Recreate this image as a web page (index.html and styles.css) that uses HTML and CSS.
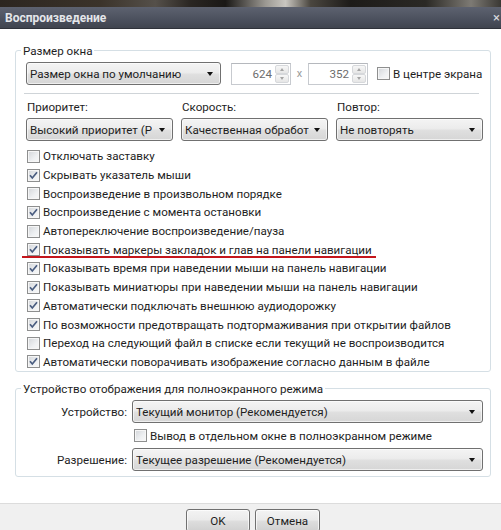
FILE: index.html
```html
<!DOCTYPE html>
<html lang="ru">
<head>
<meta charset="utf-8">
<title>Воспроизведение</title>
<link rel="stylesheet" href="styles.css">
</head>
<body>
<div class="window">
  <div class="photo"></div>
  <div class="titlebar">
    <span class="title">Воспроизведение</span>
    <span class="close">×</span>
  </div>
  <div class="content">
    <div class="group g1">
      <span class="legend">Размер окна</span>
      <div class="size-row">
        <div class="select sel-size"><span class="sel-text">Размер окна по умолчанию</span><span class="arrow"></span></div>
        <div class="spin"><span class="spin-val">624</span><span class="spin-btns"><span class="sb"><span class="up"></span></span><span class="sb"><span class="down"></span></span></span></div>
        <span class="times">x</span>
        <div class="spin"><span class="spin-val">352</span><span class="spin-btns"><span class="sb"><span class="up"></span></span><span class="sb"><span class="down"></span></span></span></div>
        <div class="check center-check"><span class="box"></span><span>В центре экрана</span></div>
      </div>
      <div class="sep"></div>
      <div class="triple">
        <div class="field">
          <div class="flabel">Приоритет:</div>
          <div class="select"><span class="sel-text">Высокий приоритет (Р</span><span class="arrow"></span></div>
        </div>
        <div class="field">
          <div class="flabel">Скорость:</div>
          <div class="select"><span class="sel-text">Качественная обработ</span><span class="arrow"></span></div>
        </div>
        <div class="field">
          <div class="flabel">Повтор:</div>
          <div class="select"><span class="sel-text">Не повторять</span><span class="arrow"></span></div>
        </div>
      </div>
      <div class="checks">
        <div class="check"><span class="box"></span><span>Отключать заставку</span></div>
        <div class="check"><span class="box on"><svg viewBox="0 0 11 11" width="11" height="11"><path d="M2 5.2 L4.3 8 L9 2.2" fill="none" stroke="#4a5d80" stroke-width="1.7"/></svg></span><span>Скрывать указатель мыши</span></div>
        <div class="check"><span class="box"></span><span>Воспроизведение в произвольном порядке</span></div>
        <div class="check"><span class="box on"><svg viewBox="0 0 11 11" width="11" height="11"><path d="M2 5.2 L4.3 8 L9 2.2" fill="none" stroke="#4a5d80" stroke-width="1.7"/></svg></span><span>Воспроизведение с момента остановки</span></div>
        <div class="check"><span class="box"></span><span>Автопереключение воспроизведение/пауза</span></div>
        <div class="check marked"><span class="box on"><svg viewBox="0 0 11 11" width="11" height="11"><path d="M2 5.2 L4.3 8 L9 2.2" fill="none" stroke="#4a5d80" stroke-width="1.7"/></svg></span><span>Показывать маркеры закладок и глав на панели навигации</span></div>
        <div class="check"><span class="box on"><svg viewBox="0 0 11 11" width="11" height="11"><path d="M2 5.2 L4.3 8 L9 2.2" fill="none" stroke="#4a5d80" stroke-width="1.7"/></svg></span><span>Показывать время при наведении мыши на панель навигации</span></div>
        <div class="check"><span class="box on"><svg viewBox="0 0 11 11" width="11" height="11"><path d="M2 5.2 L4.3 8 L9 2.2" fill="none" stroke="#4a5d80" stroke-width="1.7"/></svg></span><span>Показывать миниатюры при наведении мыши на панель навигации</span></div>
        <div class="check"><span class="box on"><svg viewBox="0 0 11 11" width="11" height="11"><path d="M2 5.2 L4.3 8 L9 2.2" fill="none" stroke="#4a5d80" stroke-width="1.7"/></svg></span><span>Автоматически подключать внешнюю аудиодорожку</span></div>
        <div class="check"><span class="box on"><svg viewBox="0 0 11 11" width="11" height="11"><path d="M2 5.2 L4.3 8 L9 2.2" fill="none" stroke="#4a5d80" stroke-width="1.7"/></svg></span><span>По возможности предотвращать подтормаживания при открытии файлов</span></div>
        <div class="check"><span class="box"></span><span>Переход на следующий файл в списке если текущий не воспроизводится</span></div>
        <div class="check"><span class="box on"><svg viewBox="0 0 11 11" width="11" height="11"><path d="M2 5.2 L4.3 8 L9 2.2" fill="none" stroke="#4a5d80" stroke-width="1.7"/></svg></span><span>Автоматически поворачивать изображение согласно данным в файле</span></div>
      </div>
    </div>
    <div class="group g2">
      <span class="legend">Устройство отображения для полноэкранного режима</span>
      <div class="dev-grid">
        <div class="dlabel">Устройство:</div>
        <div class="select"><span class="sel-text">Текущий монитор (Рекомендуется)</span><span class="arrow"></span></div>
        <div></div>
        <div class="check sep-check"><span class="box"></span><span>Вывод в отдельном окне в полноэкранном режиме</span></div>
        <div class="dlabel">Разрешение:</div>
        <div class="select"><span class="sel-text">Текущее разрешение (Рекомендуется)</span><span class="arrow"></span></div>
      </div>
    </div>
  </div>
  <div class="footer">
    <div class="btn btn-ok">OK</div>
    <div class="btn btn-cancel">Отмена</div>
  </div>
</div>
</body>
</html>
```
FILE: styles.css
```css
html, body {
  margin: 0;
  padding: 0;
  background: #fff;
}
body {
  font-family: Roboto, "Noto Sans", "DejaVu Sans", sans-serif;
  font-size: 11.6px;
  color: #1e1e1e;
}
.window {
  width: 501px;
  height: 530px;
  display: flex;
  flex-direction: column;
  overflow: hidden;
  background: #fff;
}
.photo {
  height: 7px;
  flex: none;
  background: linear-gradient(90deg, #2c2620 0%, #3b332a 20%, #55504a 31%, #2a2622 38%, #1a1816 45%, #9b9892 53%, #c9c6c0 57%, #4a463f 62%, #1d1b19 70%, #2b2925 85%, #7d7a74 94%, #3a3834 100%);
}
.titlebar {
  height: 22px;
  flex: none;
  display: flex;
  align-items: center;
  justify-content: space-between;
  padding-left: 5px;
  background: linear-gradient(#5d6270, #4b505d 60%, #40444f);
  border-bottom: 1px solid #2f323a;
  box-sizing: border-box;
}
.title {
  color: #e4e6ea;
  font-weight: bold;
  font-size: 12px;
}
.close {
  color: #d8dadf;
  font-size: 13px;
  margin-right: 1px;
  line-height: 1;
}
.content {
  flex: 1;
  padding: 21px 10px 0 15px;
}
.group {
  position: relative;
  width: 476px;
  box-sizing: border-box;
  border: 1px solid #d5dfe5;
  border-radius: 3px;
  padding: 11px 7px 0 10px;
}
.legend {
  position: absolute;
  top: -8px;
  left: 5px;
  padding: 0 2px;
  background: #fff;
  line-height: 16px;
  white-space: nowrap;
}
.size-row {
  display: flex;
  align-items: center;
  height: 23px;
}
.select {
  position: relative;
  height: 23px;
  box-sizing: border-box;
  border: 1px solid #707070;
  border-radius: 3px;
  background: linear-gradient(#f4f4f4, #ececec 45%, #dfdfdf 55%, #d6d6d6);
  box-shadow: inset 0 0 0 1px rgba(255,255,255,0.6);
  display: flex;
  align-items: center;
  padding-left: 3px;
  padding-right: 18px;
  overflow: hidden;
  white-space: nowrap;
}
.sel-text {
  overflow: hidden;
  line-height: 16px;
}
.arrow {
  position: absolute;
  right: 7px;
  top: 9px;
  width: 0;
  height: 0;
  border-left: 3.5px solid transparent;
  border-right: 3.5px solid transparent;
  border-top: 4px solid #111;
}
.sel-size {
  width: 195px;
  flex: none;
}
.spin {
  width: 60px;
  height: 22px;
  box-sizing: border-box;
  border: 1px solid #c7cacf;
  border-top-color: #b5b8bd;
  background: #fff;
  display: flex;
  align-items: center;
  justify-content: flex-end;
  padding-right: 1px;
  flex: none;
}
.size-row .spin:nth-child(2) {
  margin-left: 10px;
}
.spin-val {
  color: #6d6d6d;
  margin-right: 3px;
  line-height: 16px;
}
.spin-btns {
  display: flex;
  flex-direction: column;
  width: 14px;
  height: 18px;
}
.sb {
  flex: 1;
  border: 1px solid #d6d8db;
  border-radius: 2px;
  background: linear-gradient(#f7f7f7, #e6e6e6);
  display: flex;
  align-items: center;
  justify-content: center;
}
.up {
  width: 0; height: 0;
  border-left: 2.5px solid transparent;
  border-right: 2.5px solid transparent;
  border-bottom: 3px solid #a4a4a4;
}
.down {
  width: 0; height: 0;
  border-left: 2.5px solid transparent;
  border-right: 2.5px solid transparent;
  border-top: 3px solid #a4a4a4;
}
.times {
  width: 17px;
  text-align: center;
  color: #9a9a9a;
  font-size: 11px;
  flex: none;
}
.center-check {
  margin-left: 9px;
}
.sep {
  height: 1px;
  background: #cfd4d8;
  margin: 8px 0 0 -2px;
  width: 455px;
}
.triple {
  display: grid;
  grid-template-columns: repeat(3, 1fr);
  column-gap: 8px;
  margin-top: 5px;
}
.flabel {
  line-height: 16px;
  margin-left: 1px;
  margin-bottom: 3px;
}
.checks {
  margin-top: 6px;
}
.check {
  position: relative;
  display: flex;
  align-items: center;
  height: 18.7px;
  white-space: nowrap;
  line-height: 16px;
}
.checks .check {
  padding-left: 1px;
}
.box {
  width: 13px;
  height: 13px;
  box-sizing: border-box;
  border: 1px solid #8e8f8f;
  background: linear-gradient(135deg, #d2d5d9, #eef0f2 60%, #f8f8f8);
  box-shadow: inset 0 0 0 1px #f6f6f6;
  margin-right: 3px;
  flex: none;
  display: flex;
  align-items: center;
  justify-content: center;
}
.box svg {
  display: block;
}
.marked::after {
  content: "";
  position: absolute;
  left: -4px;
  bottom: 1px;
  width: 354px;
  height: 2px;
  background: #c4161c;
}
.g2 {
  margin-top: 16px;
  padding-bottom: 5px;
}
.dev-grid {
  display: grid;
  grid-template-columns: 101px 1fr;
  column-gap: 5px;
  align-items: center;
}
.dlabel {
  text-align: right;
  line-height: 16px;
}
.sep-check {
  height: 25px;
  padding-left: 2px;
}
.footer {
  height: 27px;
  flex: none;
  box-sizing: border-box;
  border-top: 1px solid #dcdcdc;
  background: #f0f0f0;
  display: flex;
  align-items: flex-start;
  gap: 5px;
  padding: 5px 0 0 186px;
  overflow: hidden;
}
.btn {
  height: 23px;
  box-sizing: border-box;
  border: 1px solid #707070;
  border-radius: 3px;
  background: linear-gradient(#f3f3f3, #ebebeb 45%, #dddddd 55%, #d0d0d0);
  box-shadow: inset 0 0 0 1px rgba(255,255,255,0.7);
  display: flex;
  align-items: center;
  justify-content: center;
  flex: none;
}
.btn-ok { width: 64px; }
.btn-cancel { width: 65px; }
```
